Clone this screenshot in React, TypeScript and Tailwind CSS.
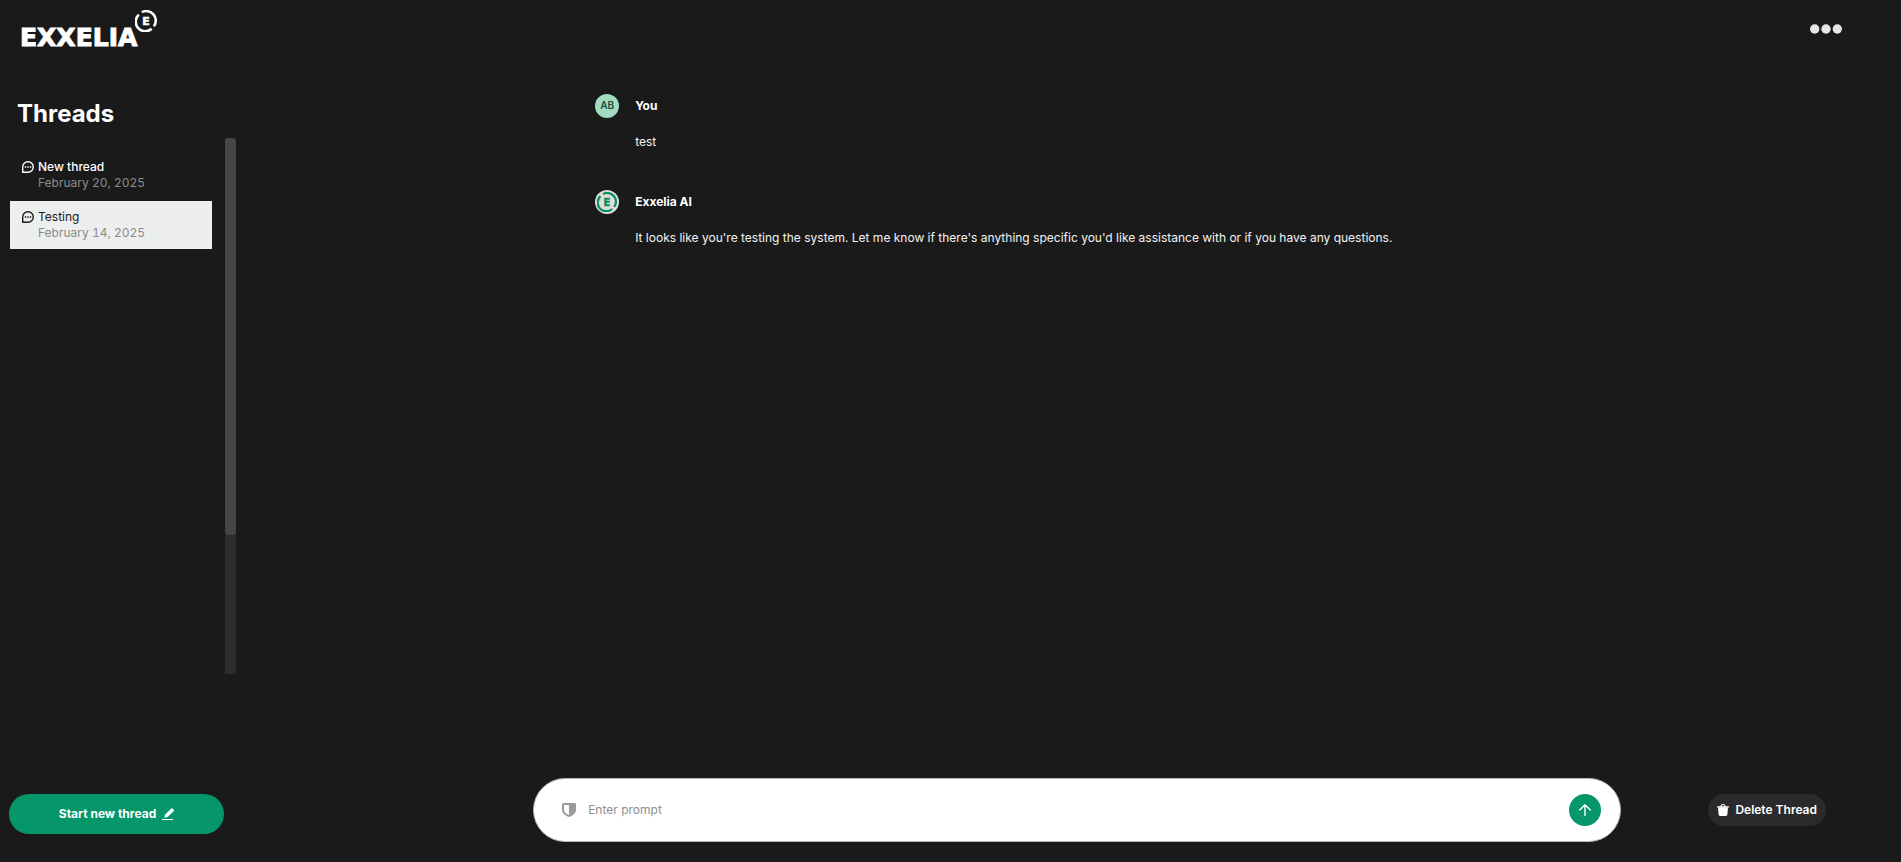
import type { ReactNode } from 'react';

type Thread = {
    title: string;
    date: string;
    active?: boolean;
};

type Message = {
    author: string;
    body: string;
    avatar: ReactNode;
};

const threads: Thread[] = [
    { title: 'New thread', date: 'February 20, 2025' },
    { title: 'Testing', date: 'February 14, 2025', active: true },
];

function RingMark({ className }: { className: string }) {
    return (
        <svg viewBox="0 0 24 24" className={className} aria-hidden="true">
            <g fill="none" stroke="currentColor" strokeWidth="2.8">
                <path d="M7.4 2.4A10.4 10.4 0 0 1 20.6 17.8" />
                <path d="M18.2 20.4A10.4 10.4 0 0 1 4.2 5" />
            </g>
            <text
                x="12"
                y="16.4"
                textAnchor="middle"
                fill="currentColor"
                stroke="currentColor"
                strokeWidth="0.6"
                className="text-[12px] font-bold font-['DejaVu_Sans',sans-serif]"
            >
                E
            </text>
        </svg>
    );
}

function ChatIcon() {
    return (
        <svg viewBox="0 0 12 12" className="w-3 h-3 shrink-0" aria-hidden="true">
            <path
                d="M.7 11.3V6A5.3 5.3 0 1 1 6 11.3Z"
                fill="none"
                stroke="currentColor"
                strokeWidth="1.4"
                strokeLinejoin="round"
            />
            <path d="M2.8 5.3h1.4v1.4H2.8zM5.3 5.3h1.4v1.4H5.3zM7.8 5.3h1.4v1.4H7.8z" fill="currentColor" />
        </svg>
    );
}

function PencilIcon() {
    return (
        <svg viewBox="0 0 12 12" className="w-3 h-3" aria-hidden="true" fill="currentColor">
            <path d="M2.3 9.7 3 6.7 8.7.9a1.7 1.7 0 0 1 2.4 0l.3.3a1.5 1.5 0 0 1 0 2.2L5.5 9.1l-3.2.6Z" />
            <path d="M0 11h11v1H0z" />
        </svg>
    );
}

function ShieldIcon() {
    return (
        <svg viewBox="0 0 14 14" className="w-[14px] h-[14px] shrink-0 text-[#9b9b9b]" aria-hidden="true">
            <path
                fill="currentColor"
                fillRule="evenodd"
                d="M1.4 0h11.2C13.4 0 14 .6 14 1.4v5.2c0 3.9-3.3 6.2-7 7.4-3.7-1.2-7-3.5-7-7.4V1.4C0 .6.6 0 1.4 0ZM7 2H2v4.7c0 2.5 2.2 4.3 5 5.3Z"
            />
        </svg>
    );
}

function TrashIcon() {
    return (
        <svg viewBox="0 0 12 12" className="w-3 h-3" aria-hidden="true" fill="currentColor">
            <path
                d="M3.5 2.2C3.5.9 4.6 0 6 0s2.5.9 2.5 2.2H12v1.2H0V2.2ZM4.7 2.2h2.6C7.3 1.5 6.7 1.1 6 1.1s-1.3.4-1.3 1.1Z"
                fillRule="evenodd"
            />
            <path d="M1 3.3h10l-.6 7.3c-.1.8-.7 1.4-1.5 1.4H3.1c-.8 0-1.4-.6-1.5-1.4Z" />
        </svg>
    );
}

function ArrowUpIcon() {
    return (
        <svg viewBox="0 0 12 12" className="w-3 h-3" aria-hidden="true">
            <path
                d="M6 11.5V.9M.7 6 6 .8 11.3 6"
                fill="none"
                stroke="currentColor"
                strokeWidth="1.4"
                strokeLinecap="round"
                strokeLinejoin="round"
            />
        </svg>
    );
}

const messages: Message[] = [
    {
        author: 'You',
        body: 'test',
        avatar: (
            <span className="w-6 h-6 rounded-full bg-[#9fdcc0] text-[#1f4a3a] text-[10px] font-semibold flex items-center justify-center">
                AB
            </span>
        ),
    },
    {
        author: 'Exxelia AI',
        body: "It looks like you're testing the system. Let me know if there's anything specific you'd like assistance with or if you have any questions.",
        avatar: (
            <span className="w-6 h-6 rounded-full bg-[#dedede] text-[#0a9158] flex items-center justify-center">
                <RingMark className="w-5 h-5" />
            </span>
        ),
    },
];

function Sidebar() {
    return (
        <aside className="w-[253px] shrink-0 flex flex-col">
            <h2 className="px-[17px] pt-1 mb-2 text-2xl font-bold text-white">Threads</h2>
            <div className="w-[236px] flex-1 flex justify-between">
                <nav className="w-[202px] ml-[10px] pt-[13px] flex flex-col gap-[2px]">
                    {threads.map((thread) => (
                        <a
                            key={thread.title}
                            href="#"
                            className={
                                thread.active
                                    ? 'flex gap-1 py-2 px-3 bg-[#edefee] text-[#1a1a1b]'
                                    : 'flex gap-1 py-2 px-3 text-white font-medium'
                            }
                        >
                            <span className="h-4 flex items-center">
                                <ChatIcon />
                            </span>
                            <span className="text-xs leading-4">
                                <span className="block">{thread.title}</span>
                                <span className="block font-normal tabular-nums text-[#8c8c8c]">{thread.date}</span>
                            </span>
                        </a>
                    ))}
                </nav>
                <div className="w-[11px] bg-[#2c2c2c] rounded-r" aria-hidden="true">
                    <div className="h-[74%] bg-[#464646] rounded" />
                </div>
            </div>
            <div className="mt-[120px] mb-7 pl-[9px]">
                <button
                    type="button"
                    className="w-[215px] h-10 rounded-full bg-[#059669] text-white text-xs font-bold flex items-center justify-center gap-[6px]"
                >
                    Start new thread
                    <PencilIcon />
                </button>
            </div>
        </aside>
    );
}

export default function App() {
    return (
        <div className="min-h-screen flex flex-col bg-[#1a1a1b] font-['Inter',sans-serif]">
            <header className="h-[94px] shrink-0 flex items-start justify-between pl-5 pr-[59px]">
                <a href="#" aria-label="Exxelia" className="flex items-start pt-[10px] text-white">
                    <span className="pt-4 text-[25px] leading-6 font-bold font-['DejaVu_Sans',sans-serif] [-webkit-text-stroke:1px_white]">
                        EXXELIA
                    </span>
                    <RingMark className="w-[22px] h-[22px] -ml-[2px]" />
                </a>
                <button type="button" aria-label="More options" className="mt-6 text-[#e6e6e6]">
                    <svg viewBox="0 0 32 10" className="w-8 h-[10px]" fill="currentColor" aria-hidden="true">
                        <circle cx="4.7" cy="5" r="4.7" />
                        <circle cx="16" cy="5" r="4.7" />
                        <circle cx="27.3" cy="5" r="4.7" />
                    </svg>
                </button>
            </header>
            <div className="flex-1 flex">
                <Sidebar />
                <main className="flex-1 flex flex-col">
                    <div className="flex-1 w-[66%] mx-auto px-[62px] flex flex-col gap-9">
                        {messages.map((message) => (
                            <article key={message.author} className="flex gap-4 text-xs">
                                {message.avatar}
                                <div>
                                    <h3 className="leading-6 font-bold text-white">{message.author}</h3>
                                    <p className="mt-3 leading-6 text-[#f4f4f4]">{message.body}</p>
                                </div>
                            </article>
                        ))}
                    </div>
                    <div className="mb-5 grid grid-cols-[17fr_66fr_17fr] items-center">
                        <form className="col-start-2 h-16 pl-7 pr-[19px] flex items-center gap-3 bg-white border border-[#b5b5b9] rounded-full">
                            <ShieldIcon />
                            <input
                                type="text"
                                aria-label="Enter prompt"
                                placeholder="Enter prompt"
                                className="flex-1 text-xs text-[#1a1a1b] placeholder:text-[#8f8f8f] outline-none"
                            />
                            <button
                                type="button"
                                aria-label="Send"
                                className="w-8 h-8 rounded-full bg-[#059669] text-white flex items-center justify-center"
                            >
                                <ArrowUpIcon />
                            </button>
                        </form>
                        <div className="flex justify-end pr-[75px]">
                            <button
                                type="button"
                                className="h-8 px-[9px] rounded-full bg-[#2b2b2d] text-white text-xs font-semibold flex items-center gap-[6px] whitespace-nowrap"
                            >
                                <TrashIcon />
                                Delete Thread
                            </button>
                        </div>
                    </div>
                </main>
            </div>
        </div>
    );
}
